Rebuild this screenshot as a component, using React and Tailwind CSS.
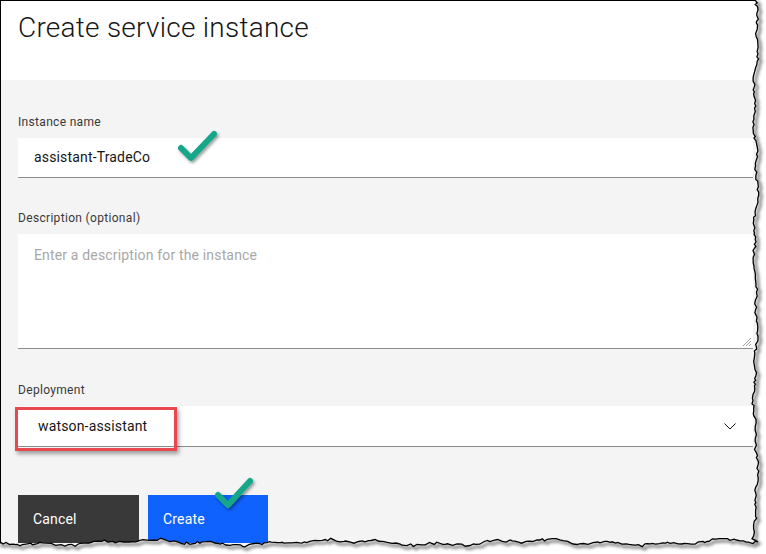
import React from "react";

function makeRng(seed) {
  let s = seed;
  return () => {
    s = (s * 16807) % 2147483647;
    return (s - 1) / 2147483646;
  };
}

function buildEdges() {
  const r = makeRng(12345);
  const right = [];
  let y = -1;
  while (y < 542) {
    const x = 755.5 + 1.6 * Math.sin(y / 23) + 1.0 * Math.sin(y / 7.3) + (r() - 0.5) * 2.4;
    right.push([x, y]);
    y += 1.5 + r() * 3;
  }
  const bottom = [];
  let x = 758;
  while (x > -2) {
    const yy = 542.5 + 2 * Math.sin(x / 31) + 1.3 * Math.sin(x / 9) + (r() - 0.5) * 2.6;
    bottom.push([x, yy]);
    x -= 1.5 + r() * 3.5;
  }
  bottom.push([-2, 542]);
  return { right, bottom };
}

function TornEdge() {
  const { right, bottom } = buildEdges();
  const pts = [...right, ...bottom];
  const line = pts.map((p, i) => `${i === 0 ? "M" : "L"}${p[0].toFixed(1)} ${p[1].toFixed(1)}`).join(" ");
  const outside = `M766 -1 L${right[0][0].toFixed(1)} -1 ${line.replace(/^M/, "L")} L-2 560 L770 560 L770 -1 Z`;
  return (
    <svg className="absolute left-0 top-0 pointer-events-none" width="766" height="554" viewBox="0 0 766 554">
      <defs>
        <clipPath id="outside">
          <path d={outside} />
        </clipPath>
        <filter id="blur" x="-10%" y="-10%" width="120%" height="120%">
          <feGaussianBlur stdDeviation="1.6" />
        </filter>
      </defs>
      <path d={outside} fill="#ffffff" />
      <g clipPath="url(#outside)">
        <path d={line} transform="translate(2.5 2.5)" fill="none" stroke="rgba(0,0,0,0.45)" strokeWidth="3" filter="url(#blur)" />
      </g>
      <path d={line} fill="none" stroke="#000" strokeWidth="1.3" />
    </svg>
  );
}

function Check({ points }) {
  return (
    <svg className="absolute left-0 top-0 pointer-events-none" width="766" height="554" viewBox="0 0 766 554">
      <defs>
        <filter id="cshadow" x="-50%" y="-50%" width="200%" height="200%">
          <feDropShadow dx="1.5" dy="2" stdDeviation="1.5" floodColor="#000" floodOpacity="0.4" />
        </filter>
      </defs>
      {points.map((p, i) => (
        <polyline
          key={i}
          points={p}
          fill="none"
          stroke="#14a78a"
          strokeWidth="6"
          strokeLinecap="round"
          strokeLinejoin="round"
          filter="url(#cshadow)"
        />
      ))}
    </svg>
  );
}

export default function App() {
  return (
    <div
      className="relative w-[766px] h-[554px] overflow-hidden bg-white"
      style={{ fontFamily: "Roboto, 'Noto Sans', sans-serif" }}
    >
      <div className="flex flex-col w-full h-full border-l border-t border-black">
        <div className="h-[79px] bg-white pl-[17px] pt-[9px]">
          <h1 className="text-[28px] leading-[36px] font-light tracking-[0.25px] text-[#161616]">Create service instance</h1>
        </div>
        <div className="flex-1 bg-[#f4f4f4] pl-[17px] pr-[13px] pt-[34px]">
          <div className="text-[12px] leading-4 tracking-[0.32px] text-[#393939] mb-2">Instance name</div>
          <div className="h-[40px] bg-white border-b border-[#8d8d8d] pl-4 flex items-center text-[14px] tracking-[0.16px] text-[#161616]">
            assistant-TradeCo
          </div>

          <div className="text-[12px] leading-4 tracking-[0.32px] text-[#393939] mb-2 mt-8">Description (optional)</div>
          <div className="relative h-[115px] bg-white border-b border-[#8d8d8d] pl-4 pt-[12px] text-[14px] leading-[18px] tracking-[0.16px] text-[#a8a8a8]">
            Enter a description for the instance
            <svg className="absolute right-[1px] bottom-[1px]" width="10" height="10" viewBox="0 0 10 10">
              <line x1="9" y1="1" x2="1" y2="9" stroke="#9a9a9a" strokeWidth="1" />
              <line x1="9" y1="4" x2="4" y2="9" stroke="#9a9a9a" strokeWidth="1" />
              <line x1="9" y1="7" x2="7" y2="9" stroke="#9a9a9a" strokeWidth="1" />
            </svg>
          </div>

          <div className="text-[12px] leading-4 tracking-[0.32px] text-[#393939] mb-2 mt-[33px]">Deployment</div>
          <div className="relative h-[41px] bg-white border-b border-[#8d8d8d] pl-5 pr-[17px] flex items-center justify-between text-[14px] tracking-[0.16px] text-[#161616]">
            <span>watson-assistant</span>
            <svg width="12" height="7" viewBox="0 0 12 7">
              <polyline points="0.5,0.5 6,6 11.5,0.5" fill="none" stroke="#161616" strokeWidth="1" />
            </svg>
          </div>

          <div className="flex gap-[9px] mt-[48px]">
            <button className="w-[121px] h-[48px] bg-[#393939] text-white text-[14px] tracking-[0.16px] text-left pl-[15px] flex items-center">
              Cancel
            </button>
            <button className="w-[120px] h-[48px] bg-[#0f62fe] text-white text-[14px] tracking-[0.16px] text-left pl-[15px] flex items-center">
              Create
            </button>
          </div>
        </div>
      </div>

      <div className="absolute left-[15px] top-[407px] w-[162px] h-[44px] border-[3px] border-[#e8474c] shadow-[2px_3px_4px_rgba(0,0,0,0.35)]" />

      <Check points={["181,148 191,158 214,134", "218,495 228,505 250,481"]} />

      <TornEdge />
    </div>
  );
}
